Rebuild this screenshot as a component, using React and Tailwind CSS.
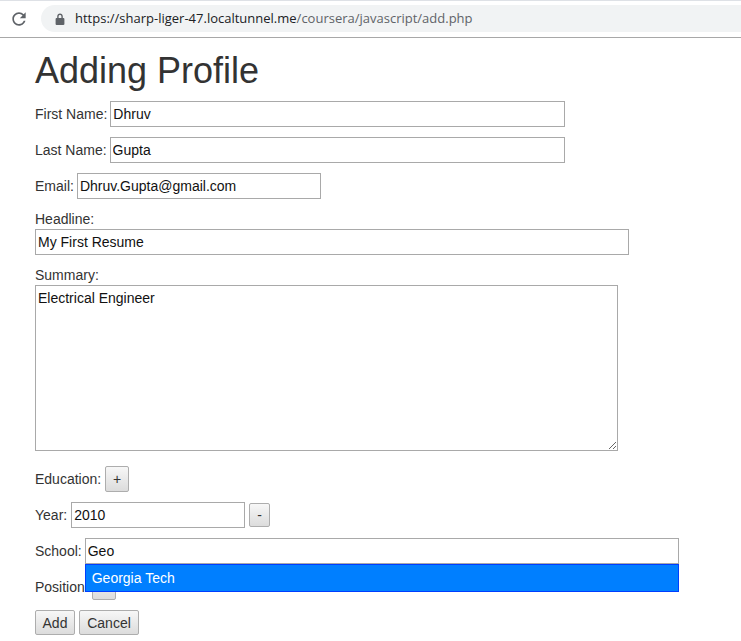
import React from 'react';

const inputCls = 'h-[26px] border border-[#a9a9a9] bg-white px-[2px] text-[14px] text-[#111] outline-none';
const btnCls = 'border border-[#adadad] rounded-[2px] bg-gradient-to-b from-[#f7f7f7] to-[#dcdcdc] text-[14px] text-[#333] flex items-center justify-center';

function ReloadIcon() {
  return (
    <svg width="20" height="20" viewBox="0 0 24 24" fill="#5f6368">
      <path d="M17.65 6.35C16.2 4.9 14.21 4 12 4c-4.42 0-7.99 3.58-7.99 8s3.57 8 7.99 8c3.73 0 6.84-2.55 7.73-6h-2.08c-.82 2.33-3.04 4-5.65 4-3.31 0-6-2.69-6-6s2.69-6 6-6c1.66 0 3.14.69 4.22 1.78L13 11h7V4l-2.35 2.35z" />
    </svg>
  );
}

function LockIcon() {
  return (
    <svg width="10" height="12" viewBox="0 0 10 12" fill="#5f6368">
      <path d="M2.2 5V3.4C2.2 1.8 3.4.6 5 .6s2.8 1.2 2.8 2.8V5h.7c.5 0 .9.4.9.9v5.1c0 .5-.4.9-.9.9h-7c-.5 0-.9-.4-.9-.9V5.9c0-.5.4-.9.9-.9h.7zm1.4 0h2.8V3.4C6.4 2.6 5.8 2 5 2s-1.4.6-1.4 1.4V5z" />
    </svg>
  );
}

function Row({ label, children, className = '' }) {
  return (
    <div className={`flex items-center gap-[3px] ${className}`}>
      <span>{label}</span>
      {children}
    </div>
  );
}

export default function App() {
  return (
    <div className="w-[741px] h-[641px] bg-white overflow-hidden" style={{ fontFamily: '"Liberation Sans", Arial, sans-serif' }}>
      {/* browser address bar */}
      <div className="h-[38px] border-t border-[#dee1e6] border-b border-b-[#a8a8a8] flex items-start pt-[4px]">
        <div className="pl-[9px] h-[27px] flex items-center">
          <ReloadIcon />
        </div>
        <div className="ml-[12px] flex-1 h-[27px] rounded-l-full bg-[#f1f3f4] flex items-center pl-[14px]">
          <LockIcon />
          <span className="ml-[10px] text-[13px]" style={{ fontFamily: '"Open Sans", "Noto Sans", sans-serif' }}>
            <span className="text-[#202124]">https://sharp-liger-47.localtunnel.me</span>
            <span className="text-[#5f6368]">/coursera/javascript/add.php</span>
          </span>
        </div>
      </div>

      {/* form */}
      <div className="pl-[35px] text-[14px] text-[#333] leading-[20px]">
        <h1 className="mt-[13px] mb-[10px] text-[36px] leading-[40px] text-[#333]">Adding Profile</h1>

        <Row label="First Name:" className="mb-[10px]">
          <input className={`${inputCls} w-[455px]`} defaultValue="Dhruv" />
        </Row>
        <Row label="Last Name:" className="mb-[10px]">
          <input className={`${inputCls} w-[455px]`} defaultValue="Gupta" />
        </Row>
        <Row label="Email:" className="mb-[10px]">
          <input className={`${inputCls} w-[244px]`} defaultValue="Dhruv.Gupta@gmail.com" />
        </Row>

        <div className="mb-[10px]">
          <div>Headline:</div>
          <input className={`${inputCls} w-[594px] block`} defaultValue="My First Resume" />
        </div>

        <div className="mb-[15px]">
          <div>Summary:</div>
          <textarea
            className="block w-[583px] h-[166px] border border-[#a9a9a9] p-[2px] text-[14px] leading-[20px] text-[#111] outline-none"
            defaultValue="Electrical Engineer"
          />
        </div>

        <Row label="Education:" className="mb-[10px] gap-[4px]">
          <button className={`${btnCls} w-[24px] h-[26px]`}>+</button>
        </Row>

        <Row label="Year:" className="mb-[10px] gap-[4px]">
          <input className={`${inputCls} w-[174px]`} defaultValue="2010" />
          <button className={`${btnCls} w-[21px] h-[24px]`}>-</button>
        </Row>

        <Row label="School:" className="mb-[10px]">
          <div className="relative">
            <input className={`${inputCls} w-[594px] border-[#86a9e6]`} defaultValue="Geo" />
            <div className="absolute left-0 top-[26px] z-10 w-[594px] h-[28px] bg-[#007fff] border border-[#003eff] text-white text-[14px] flex items-center pl-[6px]">
              Georgia Tech
            </div>
          </div>
        </Row>

        <Row label="Position:" className="mb-[10px]">
          <button className={`${btnCls} w-[24px] h-[26px]`}>+</button>
        </Row>

        <div className="flex gap-[4px]">
          <button className={`${btnCls} w-[40px] h-[25px]`}>Add</button>
          <button className={`${btnCls} w-[60px] h-[25px]`}>Cancel</button>
        </div>
      </div>
    </div>
  );
}
